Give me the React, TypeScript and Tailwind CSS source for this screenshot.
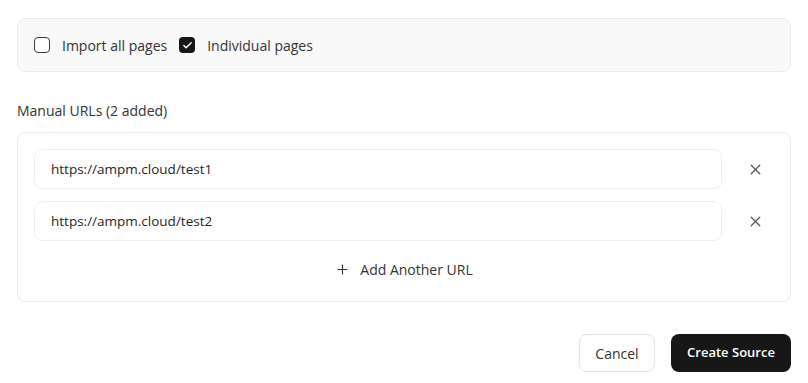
import React from "react";
import { X, Plus, Check } from "lucide-react";

export default function App() {
  const urls = ["https://ampm.cloud/test1", "https://ampm.cloud/test2"];
  return (
    <div
      className="w-[808px] h-[383px] bg-white px-[17px] pt-[18px]"
      style={{ fontFamily: '"Open Sans", "Noto Sans", sans-serif' }}
    >
      <div className="h-[54px] rounded-lg border border-[#ececec] bg-[#f9f9f9] flex items-center pl-4 gap-3">
        <label className="flex items-center gap-3">
          <span className="w-4 h-4 rounded-[4px] border-[1.5px] border-[#3a3a3a] bg-white" />
          <span className="text-[14px] font-medium text-[#333]">Import all pages</span>
        </label>
        <label className="flex items-center gap-3">
          <span className="w-4 h-4 rounded-[4px] bg-[#171717] flex items-center justify-center">
            <Check size={11} strokeWidth={3} color="white" />
          </span>
          <span className="text-[14px] font-medium text-[#333]">Individual pages</span>
        </label>
      </div>

      <div className="mt-[29px] text-[14px] font-medium text-[#333] leading-[20px]">
        Manual URLs (2 added)
      </div>

      <div className="mt-[11px] h-[170px] rounded-lg border border-[#ececec] bg-white px-4 pt-4">
        <div className="flex flex-col gap-3">
          {urls.map((u) => (
            <div key={u} className="flex items-center">
              <div className="w-[688px] h-[40px] rounded-lg border border-[#efefef] flex items-center px-4 text-[13.5px] text-[#1f1f1f]">
                {u}
              </div>
              <button className="ml-[23px] w-[20px] h-[20px] flex items-center justify-center text-[#555]">
                <X size={17} strokeWidth={1.75} />
              </button>
            </div>
          ))}
        </div>
        <div className="flex justify-center items-center mt-[16px] h-[24px] gap-[10px] text-[14px] font-medium text-[#333]">
          <Plus size={15} strokeWidth={1.75} />
          <span>Add Another URL</span>
        </div>
      </div>

      <div className="mt-[32px] flex justify-end gap-4">
        <button className="w-[76px] h-[38px] rounded-lg border border-[#e2e2e2] bg-white text-[14px] font-medium text-[#333]">
          Cancel
        </button>
        <button className="w-[120px] h-[38px] rounded-lg bg-[#171717] text-white text-[13px] font-semibold">
          Create Source
        </button>
      </div>
    </div>
  );
}
